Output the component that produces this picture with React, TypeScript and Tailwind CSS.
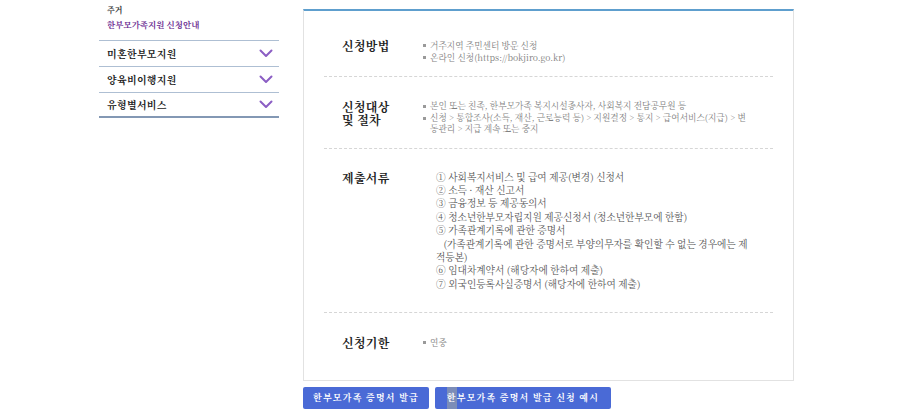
import React from 'react';

const FONT = { fontFamily: '"Noto Serif CJK KR", "Noto Sans CJK KR", serif' };

const sideItems = ['미혼한부모지원', '양육비이행지원', '유형별서비스'];

const Chevron = () => (
  <svg width="14" height="9" viewBox="0 0 14 9" className="shrink-0">
    <path d="M1.5 1.5 L7 7 L12.5 1.5" fill="none" stroke="#8b5ec4" strokeWidth="2" strokeLinecap="round" strokeLinejoin="round" />
  </svg>
);

const Bullets = ({ items, leading = 'leading-[12px]' }: { items: React.ReactNode[]; leading?: string }) => (
  <ul className={`text-[8.7px] ${leading} text-[#808080] whitespace-nowrap`}>
    {items.map((t, i) => (
      <li key={i} className="flex">
        <span className="w-[7px] shrink-0 flex items-start">
          <span className="mt-[5px] w-[3px] h-[3px] bg-[#9a9a9a]" />
        </span>
        <span>{t}</span>
      </li>
    ))}
  </ul>
);

const docs: React.ReactNode[] = [
  '① 사회복지서비스 및 급여 제공(변경) 신청서',
  '② 소득 · 재산 신고서',
  '③ 금융정보 등 제공동의서',
  '④ 청소년한부모자립지원 제공신청서 (청소년한부모에 한함)',
  <>
    ⑤ 가족관계기록에 관한 증명서
    <br />
    {'\u00a0\u00a0\u00a0'}(가족관계기록에 관한 증명서로 부양의무자를 확인할 수 없는 경우에는 제
    <br />
    적등본)
  </>,
  '⑥ 임대차계약서 (해당자에 한하여 제출)',
  '⑦ 외국인등록사실증명서 (해당자에 한하여 제출)',
];

export default function App() {
  return (
    <div className="w-[900px] h-[414px] bg-white overflow-hidden flex" style={FONT}>
      {/* sidebar */}
      <aside className="ml-[99px] w-[180px] shrink-0">
        <div className="px-2 pt-[3px] text-[8px] font-bold leading-[13px] text-[#333]">주거</div>
        <div className="px-2 pt-[2px] pb-[9px] text-[8.5px] font-bold leading-[13px] text-[#6a2c91]">
          한부모가족지원 신청안내
        </div>
        {sideItems.map((s, i) => (
          <div
            key={s}
            className={`flex items-center justify-between border-t border-[#aebfd3] pl-2 pr-[6px] h-[26px] ${
              i === sideItems.length - 1 ? 'border-b-2 border-b-[#8398b4]' : ''
            }`}
          >
            <span className="text-[10px] font-bold tracking-[0.3px] text-[#222]">{s}</span>
            <Chevron />
          </div>
        ))}
      </aside>

      {/* main */}
      <main className="ml-[24px] mt-[9px] w-[491px] shrink-0">
        <div className="border border-[#e2e2e2] border-t-2 border-t-[#5e9fce] px-5 h-[372px]">
          <section className="flex border-b border-dashed border-[#d6d6d6] pt-[28px] pb-[13px]">
            <h3 className="w-[81px] ml-[18px] shrink-0 text-[12px] font-bold leading-[13px] tracking-[0.3px] text-[#222]">신청방법</h3>
            <Bullets items={['거주지역 주민센터 방문 신청', '온라인 신청(https://bokjiro.go.kr)']} />
          </section>

          <section className="flex border-b border-dashed border-[#d6d6d6] pt-[23px] pb-[13px]">
            <h3 className="w-[81px] ml-[18px] shrink-0 text-[12px] font-bold leading-[13px] tracking-[0.3px] text-[#222]">
              신청대상
              <br />및 절차
            </h3>
            <Bullets
              leading="leading-[11.5px]"
              items={[
                '본인 또는 친족, 한부모가족 복지시설종사자, 사회복지 전담공무원 등',
                <>
                  신청 &gt; 통합조사(소득, 재산, 근로능력 등) &gt; 지원결정 &gt; 통지 &gt; 급여서비스(지급) &gt; 변
                  <br />
                  동관리 &gt; 지급 계속 또는 중지
                </>,
              ]}
            />
          </section>

          <section className="flex border-b border-dashed border-[#d6d6d6] pt-[22px] pb-[21px]">
            <h3 className="w-[94px] ml-[18px] shrink-0 text-[12px] font-bold leading-[13.4px] tracking-[0.3px] text-[#222]">제출서류</h3>
            <ul className="text-[9.7px] leading-[13.4px] text-[#555] whitespace-nowrap">
              {docs.map((d, i) => (
                <li key={i}>{d}</li>
              ))}
            </ul>
          </section>

          <section className="flex pt-[23px]">
            <h3 className="w-[81px] ml-[18px] shrink-0 text-[12px] font-bold leading-[13px] tracking-[0.3px] text-[#222]">신청기한</h3>
            <Bullets items={['연중']} />
          </section>
        </div>

        <div className="flex gap-[6px] mt-[6px]">
          <button className="h-[22px] w-[126px] rounded-[2px] bg-[#4a6ad6] text-[9px] font-bold tracking-[1.2px] text-white whitespace-nowrap flex items-center justify-center">
            한부모가족 증명서 발급
          </button>
          <button className="h-[22px] w-[176px] rounded-[2px] bg-[#4a6ad6] text-[9px] font-bold tracking-[1.2px] text-white whitespace-nowrap flex items-stretch justify-center">
            <span className="bg-[#7c8db8] flex items-center">한</span>
            <span className="flex items-center">부모가족 증명서 발급 신청 예시</span>
          </button>
        </div>
      </main>
    </div>
  );
}
